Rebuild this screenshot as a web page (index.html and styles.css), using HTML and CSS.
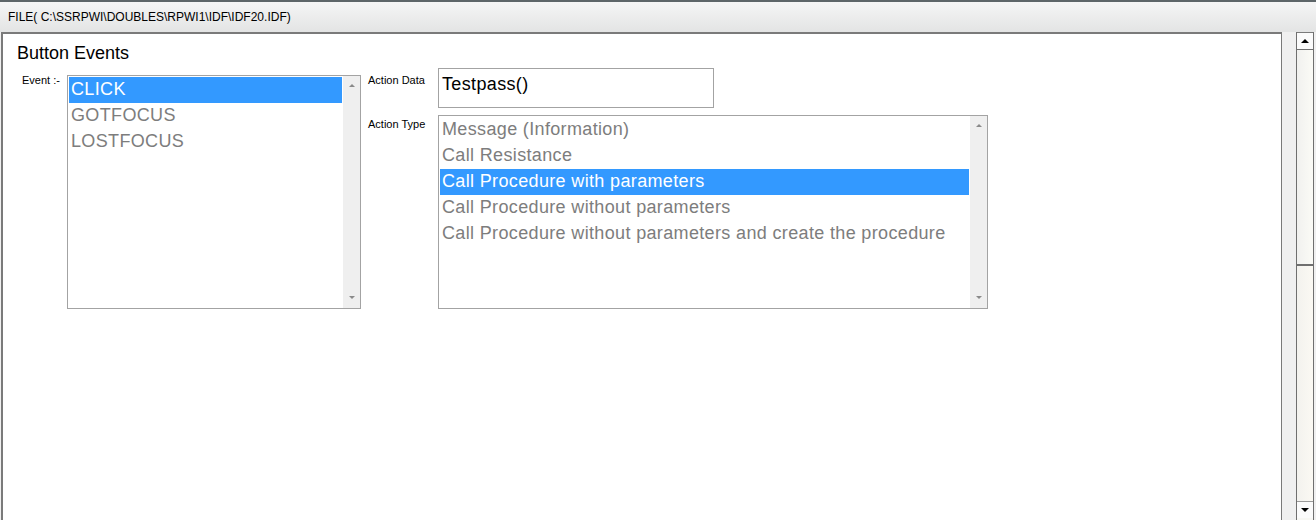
FILE: index.html
```html
<!DOCTYPE html>
<html>
<head>
<meta charset="utf-8">
<link rel="stylesheet" href="styles.css">
</head>
<body>
<div class="titlebar">FILE( C:\SSRPWI\DOUBLES\RPWI1\IDF\IDF20.IDF)</div>
<div class="workspace">
  <div class="panel">
    <h1 class="heading">Button Events</h1>
    <div class="form">
      <div class="event-col">
        <div class="label label-event">Event :-</div>
        <div class="listbox listbox-event">
          <div class="items">
            <div class="item selected">CLICK</div>
            <div class="item">GOTFOCUS</div>
            <div class="item">LOSTFOCUS</div>
          </div>
          <div class="vscroll">
            <span class="arr up"></span>
            <span class="arr down"></span>
          </div>
        </div>
      </div>
      <div class="action-col">
        <div class="field-row">
          <div class="label label-data">Action Data</div>
          <div class="textbox">Testpass()</div>
        </div>
        <div class="field-row">
          <div class="label label-type">Action Type</div>
          <div class="listbox listbox-type">
            <div class="items">
              <div class="item">Message (Information)</div>
              <div class="item">Call Resistance</div>
              <div class="item selected">Call Procedure with parameters</div>
              <div class="item">Call Procedure without parameters</div>
              <div class="item">Call Procedure without parameters and create the procedure</div>
            </div>
            <div class="vscroll">
              <span class="arr up"></span>
              <span class="arr down"></span>
            </div>
          </div>
        </div>
      </div>
    </div>
  </div>
  <div class="gutter"></div>
  <div class="page-scroll">
    <div class="pbtn pbtn-up"><span class="parr up"></span></div>
    <div class="pthumb"></div>
    <div class="ptrack"></div>
    <div class="pbtn pbtn-down"><span class="parr down"></span></div>
  </div>
  <div class="edge"></div>
</div>
</body>
</html>
```

FILE: styles.css
```css
html, body {
  margin: 0;
  padding: 0;
  height: 520px;
  overflow: hidden;
  background: #f0f0f0;
  font-family: "Liberation Sans", Arial, sans-serif;
}

.titlebar {
  height: 30px;
  border-top: 2px solid #5d6568;
  background: linear-gradient(#f5f5f5, #e3e4e4);
  font-size: 12px;
  line-height: 30px;
  padding-left: 8px;
  color: #000;
  box-sizing: content-box;
}

.workspace {
  display: flex;
  height: 488px;
}

.panel {
  margin-left: 1px;
  width: 1278px;
  background: #fff;
  border-top: 2px solid #7a7a7a;
  border-left: 2px solid #7a7a7a;
  border-right: 1px solid #7a7a7a;
  box-sizing: content-box;
}

.heading {
  margin: 0;
  padding: 9px 0 0 14px;
  font-size: 18px;
  font-weight: normal;
  line-height: 21px;
  color: #000;
  height: 25px;
}

.form {
  display: flex;
  align-items: flex-start;
  padding-left: 19px;
}

.label {
  font-size: 11px;
  line-height: 13px;
  color: #000;
}

.event-col {
  display: flex;
  margin-top: 7px;
}

.label-event {
  width: 45px;
  margin-top: -1px;
}

.listbox {
  display: flex;
  border: 1px solid #a3a3a3;
  background: #fff;
  box-sizing: border-box;
}

.listbox-event {
  width: 294px;
  height: 234px;
}

.listbox-type {
  width: 550px;
  height: 194px;
}

.items {
  flex: 1;
  padding: 1px;
}

.item {
  height: 26px;
  line-height: 25px;
  font-size: 18px;
  letter-spacing: 0.35px;
  color: #7d7d7d;
  padding-left: 2px;
  white-space: nowrap;
}

.item.selected {
  background: #3399ff;
  color: #fff;
}

.vscroll {
  width: 17px;
  background: #efefef;
  display: flex;
  flex-direction: column;
  justify-content: space-between;
  align-items: center;
  padding: 8px 0 9px;
  box-sizing: border-box;
}

.arr {
  width: 0;
  height: 0;
  border-left: 3px solid transparent;
  border-right: 3px solid transparent;
}

.arr.up {
  border-bottom: 3px solid #8a8a8a;
}

.arr.down {
  border-top: 3px solid #8a8a8a;
}

.action-col {
  margin-left: 7px;
  display: flex;
  flex-direction: column;
  gap: 7px;
}

.field-row {
  display: flex;
}

.label-data {
  width: 70px;
  padding-top: 6px;
}

.label-type {
  width: 70px;
  padding-top: 3px;
}

.textbox {
  width: 276px;
  height: 40px;
  border: 1px solid #a3a3a3;
  box-sizing: border-box;
  font-size: 18px;
  letter-spacing: 0.35px;
  line-height: 30px;
  padding-left: 3px;
  color: #000;
}

.gutter {
  width: 14px;
  background: #f0f0f0;
}

.page-scroll {
  width: 16px;
  border-left: 1px solid #6f6f6f;
  border-right: 1px solid #6f6f6f;
  display: flex;
  flex-direction: column;
  background: #f7f7f3;
  box-sizing: content-box;
}

.pbtn {
  height: 16px;
  background: #fbfbfb;
  display: flex;
  align-items: center;
  justify-content: center;
}

.pbtn-up {
  border-top: 1px solid #7a7a7a;
  border-bottom: 1px solid #6f6f6f;
}

.pbtn-down {
  border-top: 1px solid #9a9a9a;
  margin-bottom: 2px;
}

.pthumb {
  height: 214px;
  background: linear-gradient(90deg, #f1f1ef, #fbfbf6);
  border-bottom: 2px solid #6f6f6f;
}

.ptrack {
  flex: 1;
  background: linear-gradient(90deg, #f3f2ee, #fbf9f3);
}

.parr {
  width: 0;
  height: 0;
  border-left: 4px solid transparent;
  border-right: 4px solid transparent;
}

.parr.up {
  border-bottom: 4px solid #000;
}

.parr.down {
  border-top: 4px solid #000;
}

.edge {
  flex: 1;
  background: #f0f0f0;
}
```
